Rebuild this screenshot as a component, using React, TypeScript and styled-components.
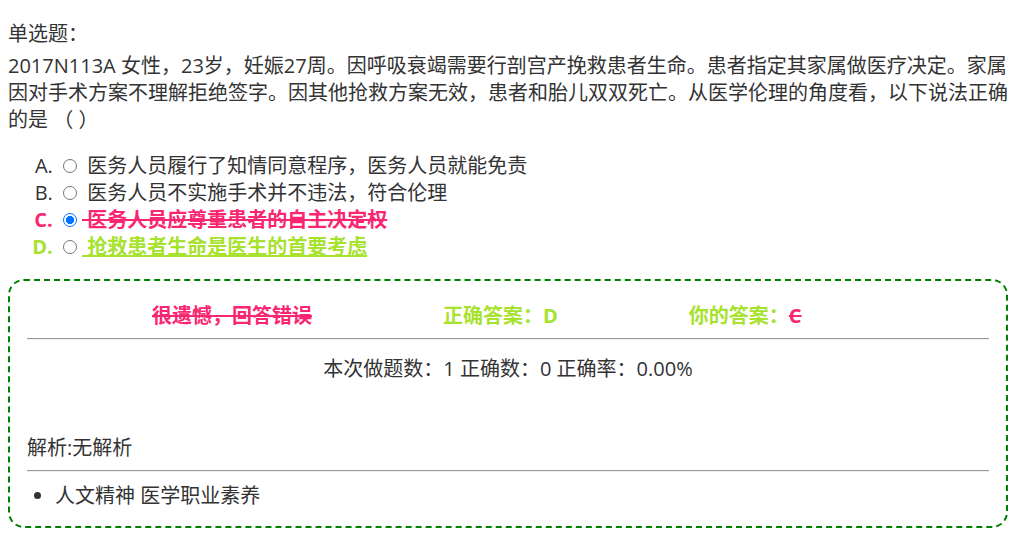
import React from "react";
import styled, { createGlobalStyle } from "styled-components";

const PINK = "#f92672";
const GREEN = "#a6e22e";
const TEXT = "#333333";

const GlobalStyle = createGlobalStyle`
  html, body {
    margin: 0;
    padding: 0;
    background: #ffffff;
  }
  body {
    margin: 8px;
    font-family: "Open Sans", "Noto Sans CJK SC", sans-serif;
    font-size: 20px;
    line-height: 27px;
    color: ${TEXT};
  }
`;

const Page = styled.div`
  display: flex;
  flex-direction: column;
  padding-top: 12px;
`;

const Title = styled.div`
  margin-bottom: 5px;
`;

const Question = styled.p`
  margin: 0;
`;

const Options = styled.ol`
  list-style-type: upper-alpha;
  margin: 19px 0 19px;
  padding-left: 50px;
`;

const Option = styled.li<{ $tone?: "wrong" | "right" }>`
  color: ${(p) => (p.$tone === "wrong" ? PINK : p.$tone === "right" ? GREEN : TEXT)};
  font-weight: ${(p) => (p.$tone ? 700 : 400)};
`;

const Radio = styled.input.attrs({ type: "radio" })`
  appearance: none;
  -webkit-appearance: none;
  display: inline-block;
  box-sizing: border-box;
  margin: 0 5px 0 5px;
  width: 14px;
  min-width: 14px;
  height: 14px;
  border: 1.2px solid #767676;
  border-radius: 50%;
  background: #ffffff;
  vertical-align: 0px;

  &:checked {
    border: 1.6px solid #0075ff;
    background: radial-gradient(circle, #0075ff 0 3.8px, #ffffff 4.4px);
  }
`;

const OptionText = styled.span<{ $deco?: "strike" | "under" }>`
  white-space: pre;
  text-decoration: ${(p) =>
    p.$deco === "strike" ? "line-through" : p.$deco === "under" ? "underline" : "none"};
`;

const ResultBox = styled.div`
  border: 2px dashed #008000;
  border-radius: 16px;
  padding: 21px 17px 17px;
`;

const VerdictRow = styled.div`
  display: flex;
  gap: 131px;
  padding-left: 125px;
  font-weight: 700;
`;

const Verdict = styled.span<{ $color: string; $strike?: boolean }>`
  color: ${(p) => p.$color};
  text-decoration: ${(p) => (p.$strike ? "line-through" : "none")};
  white-space: nowrap;
`;

const Divider = styled.hr<{ $below: number }>`
  margin: 9px 0 ${(p) => p.$below}px;
  border: none;
  border-top: 1px solid #9a9a9a;
  border-bottom: 1px solid #eeeeee;
`;

const Stats = styled.div`
  text-align: center;
  margin-bottom: 52px;
`;

const Analysis = styled.div``;

const Tags = styled.ul`
  margin: 0;
  padding-left: 28px;
  list-style-type: disc;
`;

export default function App() {
  return (
    <>
      <GlobalStyle />
      <Page>
        <Title>单选题：</Title>
        <Question>
          2017N113A 女性，23岁，妊娠27周。因呼吸衰竭需要行剖宫产挽救患者生命。患者指定其家属做医疗决定。家属
          <br />
          因对手术方案不理解拒绝签字。因其他抢救方案无效，患者和胎儿双双死亡。从医学伦理的角度看，以下说法正确
          <br />
          的是 （ ）
        </Question>
        <Options>
          <Option>
            <Radio name="q" readOnly checked={false} />
            <OptionText>{" 医务人员履行了知情同意程序，医务人员就能免责"}</OptionText>
          </Option>
          <Option>
            <Radio name="q" readOnly checked={false} />
            <OptionText>{" 医务人员不实施手术并不违法，符合伦理"}</OptionText>
          </Option>
          <Option $tone="wrong">
            <Radio name="q" readOnly checked />
            <OptionText $deco="strike">{" 医务人员应尊重患者的自主决定权"}</OptionText>
          </Option>
          <Option $tone="right">
            <Radio name="q" readOnly checked={false} />
            <OptionText $deco="under">{" 抢救患者生命是医生的首要考虑"}</OptionText>
          </Option>
        </Options>
        <ResultBox>
          <VerdictRow>
            <Verdict $color={PINK} $strike>
              很遗憾，回答错误
            </Verdict>
            <Verdict $color={GREEN}>正确答案：D</Verdict>
            <Verdict $color={GREEN}>
              你的答案：
              <Verdict $color={PINK} $strike>
                C
              </Verdict>
            </Verdict>
          </VerdictRow>
          <Divider $below={15} />
          <Stats>本次做题数：1 正确数：0 正确率：0.00%</Stats>
          <Analysis>解析:无解析</Analysis>
          <Divider $below={10} />
          <Tags>
            <li>人文精神 医学职业素养</li>
          </Tags>
        </ResultBox>
      </Page>
    </>
  );
}
